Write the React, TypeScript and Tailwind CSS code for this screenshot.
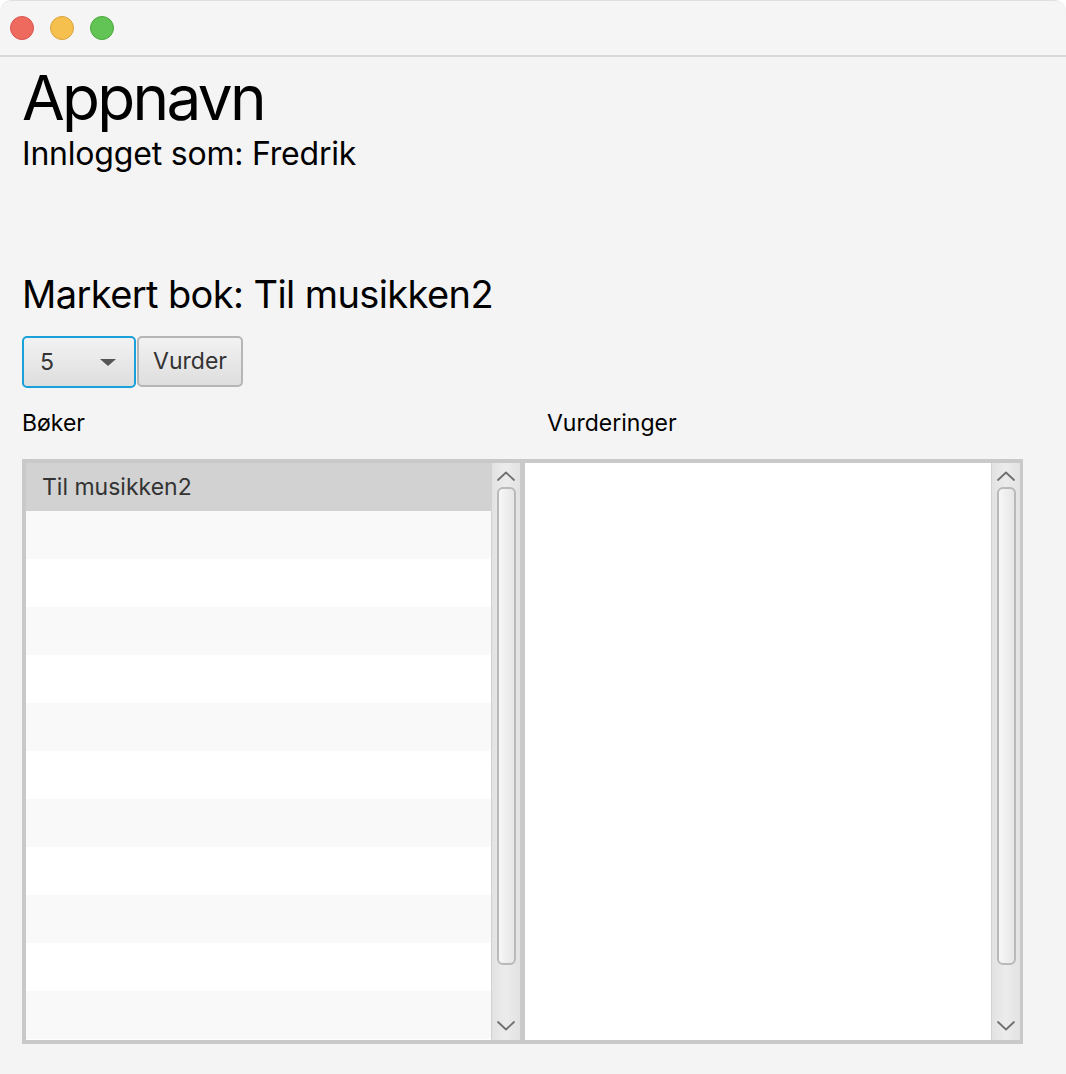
const rows = Array.from({ length: 12 }, (_, i) => i);

function Chevron({ up }: { up: boolean }) {
  return (
    <svg width="18" height="10" viewBox="0 0 18 10" fill="none">
      <polyline
        points={up ? '1,9 9,1.5 17,9' : '1,1 9,8.5 17,1'}
        stroke="#707070"
        strokeWidth="1.8"
        strokeLinecap="round"
        strokeLinejoin="round"
      />
    </svg>
  );
}

function ScrollBar() {
  return (
    <div className="flex h-full w-[29px] flex-col items-center border-l border-[#d2d2d2] bg-gradient-to-r from-[#e2e2e2] via-[#ececec] to-[#e2e2e2]">
      <div className="flex h-[24px] items-center justify-center pt-[1px]">
        <Chevron up />
      </div>
      <div className="h-[478px] w-[19px] rounded-[6px] border-[2px] border-[#b9b9b9] bg-gradient-to-r from-[#f7f7f7] to-[#e6e6e6]" />
      <div className="flex flex-1 items-end justify-center pb-[9px]">
        <Chevron up={false} />
      </div>
    </div>
  );
}

export default function App() {
  return (
    <div className="flex h-[1074px] w-[1066px] flex-col overflow-hidden rounded-t-[12px] border-t border-[#e0e0e0] bg-[#f4f4f4] font-['Inter',sans-serif]">
      {/* Vinduets tittellinje */}
      <div className="flex h-[56px] shrink-0 items-center gap-[16px] border-b-[2px] border-[#d8d8d8] bg-[#f5f5f5] pl-[10px]">
        <span className="h-[24px] w-[24px] rounded-full border border-[#d9544d] bg-[#ee6a5f]" />
        <span className="h-[24px] w-[24px] rounded-full border border-[#dba23c] bg-[#f6c04f]" />
        <span className="h-[24px] w-[24px] rounded-full border border-[#4aa93c] bg-[#61c454]" />
      </div>

      <div className="flex flex-col px-[22px]">
        <h1 className="mt-[10px] text-[62px] leading-none tracking-[-2.7px] text-black">Appnavn</h1>
        <p className="mt-[9px] text-[32px] leading-none tracking-[-0.2px] text-black">Innlogget som: Fredrik</p>

        <h2 className="mt-[105px] text-[38px] leading-none tracking-[-0.6px] text-black">Markert bok: Til musikken2</h2>

        <div className="mt-[23px] flex gap-[1px]">
          <div className="flex h-[52px] w-[114px] items-center justify-between rounded-[5px] border-[2px] border-[#1aa1d9] bg-gradient-to-b from-[#f2f2f2] to-[#dedede] pl-[16px] pr-[18px] text-[23px] text-[#333]">
            <span>5</span>
            <span className="h-0 w-0 border-x-[8px] border-t-[7px] border-x-transparent border-t-[#555]" />
          </div>
          <button className="h-[51px] w-[106px] rounded-[5px] border-[2px] border-[#b6b6b6] bg-gradient-to-b from-[#f2f2f2] to-[#dedede] text-[23px] text-[#333]">
            Vurder
          </button>
        </div>

        <div className="mt-[24px] flex text-[23px] leading-none text-black">
          <span className="w-[525px]">Bøker</span>
          <span>Vurderinger</span>
        </div>

        <div className="mt-[24px] flex h-[585px]">
          <div className="flex w-[499px] border-y-[4px] border-l-[4px] border-r-[1px] border-[#c9c9c9] bg-white">
            <div className="flex flex-1 flex-col">
              {rows.map((i) => (
                <div
                  key={i}
                  className={
                    i === 0
                      ? 'flex h-[48px] shrink-0 items-center bg-[#d2d2d2] pl-[16px] text-[23px] text-[#333]'
                      : i % 2 === 1
                        ? 'h-[48px] shrink-0 bg-[#f9f9f9]'
                        : 'h-[48px] shrink-0 bg-white'
                  }>
                  {i === 0 ? 'Til musikken2' : null}
                </div>
              ))}
            </div>
            <ScrollBar />
          </div>
          <div className="flex w-[502px] border-[4px] border-l-[4px] border-r-[3px] border-[#c9c9c9] bg-white">
            <div className="flex-1" />
            <ScrollBar />
          </div>
        </div>
      </div>
    </div>
  );
}
